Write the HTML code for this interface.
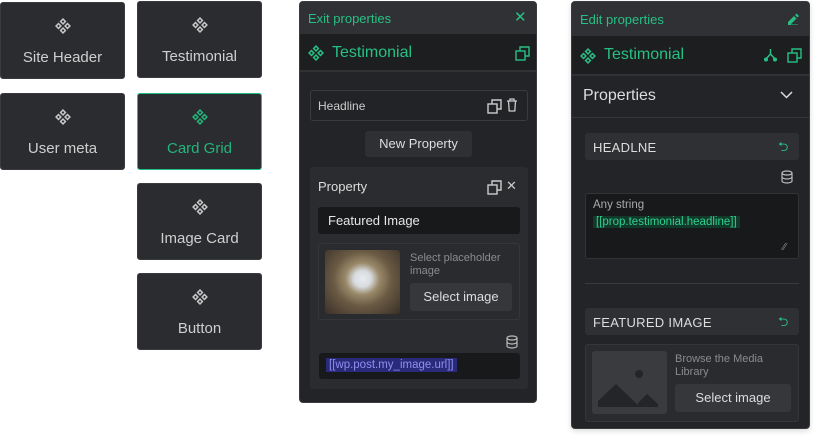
<!DOCTYPE html>
<html><head><style>
*{box-sizing:border-box;margin:0;padding:0}
body{width:816px;height:438px;background:#fff;font-family:"Liberation Sans",sans-serif;position:relative;overflow:hidden}
.a{position:absolute}
.card{position:absolute;background:#2b2c2f;border-radius:3px;color:#cfcfcf;font-size:15px;text-align:center;width:125px;height:77px;border:1px solid #3a3b3e}
.card svg{position:absolute;left:54px;top:15px}
.card span{position:absolute;left:0;right:0;top:46px}
.sel{border:1.5px solid #22c080;color:#22b57c}
.g{color:#27c084}
.box{position:absolute;border-radius:3px}
</style></head><body>
<svg width="0" height="0" style="position:absolute"><defs>
<g id="dia" fill="none" stroke-width="1.5"><rect x="6.3" y="1.8" width="3.4" height="3.4" transform="rotate(45 8 3.5)"/><rect x="6.3" y="10.8" width="3.4" height="3.4" transform="rotate(45 8 12.5)"/><rect x="1.8" y="6.3" width="3.4" height="3.4" transform="rotate(45 3.5 8)"/><rect x="10.8" y="6.3" width="3.4" height="3.4" transform="rotate(45 12.5 8)"/></g>
<g id="cp" fill="none" stroke-width="1.4"><rect x="1" y="5" width="9" height="9"/><path d="M5 5V1h9v9h-4"/></g>
</defs></svg>

<div class="card" style="left:0;top:2px"><svg width="16" height="16" stroke="#c8c8c8"><use href="#dia"/></svg><span>Site Header</span></div>
<div class="card" style="left:137px;top:1px"><svg width="16" height="16" stroke="#c8c8c8"><use href="#dia"/></svg><span>Testimonial</span></div>
<div class="card" style="left:0;top:93px"><svg width="16" height="16" stroke="#c8c8c8"><use href="#dia"/></svg><span>User meta</span></div>
<div class="card sel" style="left:137px;top:93px"><svg width="16" height="16" stroke="#22b57c"><use href="#dia"/></svg><span>Card Grid</span></div>
<div class="card" style="left:137px;top:183px"><svg width="16" height="16" stroke="#c8c8c8"><use href="#dia"/></svg><span>Image Card</span></div>
<div class="card" style="left:137px;top:273px"><svg width="16" height="16" stroke="#c8c8c8"><use href="#dia"/></svg><span>Button</span></div>

<!-- middle panel -->
<div class="a" style="left:299px;top:1px;width:238px;height:402px;background:#232427;border-radius:4px;border:1px solid #3a3b3e;overflow:hidden">
 <div class="a" style="left:0;top:0;width:238px;height:32px;background:#2f3134"></div>
 <div class="a g" style="left:8px;top:9px;font-size:13px">Exit properties</div>
 <div class="a g" style="left:214px;top:6px;font-size:15px">✕</div>
 <div class="a" style="left:0;top:32px;width:238px;height:38px;background:#1d1e20;border-bottom:2px solid #313235"></div>
 <svg class="a" style="left:8px;top:43px" width="16" height="16" stroke="#27c084"><use href="#dia"/></svg>
 <div class="a g" style="left:32px;top:42px;font-size:16px">Testimonial</div>
 <svg class="a" style="left:215px;top:44px" width="15" height="15" stroke="#27c084"><use href="#cp"/></svg>
 <div class="box" style="left:10px;top:88px;width:218px;height:31px;border:1px solid #3a3b3e;background:#222326"></div>
 <div class="a" style="left:18px;top:97px;font-size:12px;color:#ccc">Headline</div>
 <svg class="a" style="left:187px;top:97px" width="15" height="15" stroke="#ccc"><use href="#cp"/></svg>
 <svg class="a" style="left:206px;top:96px" width="12" height="14" fill="none" stroke="#ccc" stroke-width="1.3"><path d="M1 3h10M4 3V1h4v2M2.5 3l.7 10h5.6l.7-10"/></svg>
 <div class="box" style="left:65px;top:129px;width:107px;height:26px;background:#2e3033;color:#ddd;font-size:13px;text-align:center;line-height:26px">New Property</div>
 <div class="box" style="left:10px;top:165px;width:218px;height:222px;background:#2b2c2f"></div>
 <div class="a" style="left:18px;top:177px;font-size:13px;color:#ddd">Property</div>
 <svg class="a" style="left:187px;top:178px" width="15" height="15" stroke="#ccc"><use href="#cp"/></svg>
 <div class="a" style="left:206px;top:176px;font-size:13px;color:#ccc">✕</div>
 <div class="box" style="left:18px;top:205px;width:202px;height:27px;background:#18191b"></div>
 <div class="a" style="left:28px;top:211px;font-size:13px;color:#e6e6e6">Featured Image</div>
 <div class="box" style="left:18px;top:241px;width:202px;height:77px;border:1px solid #35363a;background:#2a2b2e"></div>
 <div class="box" style="left:25px;top:248px;width:75px;height:64px;background:radial-gradient(ellipse at 50% 45%,#e8ecf0 0,#d8dce0 16%,#9a8a6a 32%,#6a5a44 55%,#3a3028 100%)"></div>
 <div class="a" style="left:110px;top:250px;font-size:11px;color:#8a8b8e;line-height:13px">Select placeholder<br>image</div>
 <div class="box" style="left:110px;top:281px;width:102px;height:28px;background:#36373b;color:#ddd;font-size:13px;text-align:center;line-height:28px">Select image</div>
 <svg class="a" style="left:206px;top:333px" width="12" height="14" fill="none" stroke="#bbb" stroke-width="1.2"><ellipse cx="6" cy="3" rx="5" ry="2"/><path d="M1 3v8c0 1 2.2 2 5 2s5-1 5-2V3M1 7c0 1 2.2 2 5 2s5-1 5-2"/></svg>
 <div class="box" style="left:19px;top:351px;width:201px;height:26px;background:#18191b"></div>
 <div class="a" style="left:26px;top:356px;font-size:11.5px;color:#8e8ff0;background:#2a2a7a;padding:1px 3px">[[wp.post.my_image.url]]</div>
</div>

<!-- right panel -->
<div class="a" style="left:571px;top:1px;width:239px;height:428px;background:#232427;border-radius:4px;border:1px solid #3a3b3e;overflow:hidden;box-shadow:0 2px 6px rgba(0,0,0,.15)">
 <div class="a" style="left:0;top:0;width:239px;height:34px;background:#2f3134"></div>
 <div class="a g" style="left:8px;top:10px;font-size:13px">Edit properties</div>
 <svg class="a" style="left:215px;top:11px" width="12" height="12" fill="#27c084"><path d="M1 9l6-6 2.5 2.5-6 6H1zM8 2l1.5-1.5 2.5 2.5L10.5 4.5zM1 11.5h10v.5H1z"/></svg>
 <div class="a" style="left:0;top:34px;width:239px;height:40px;background:#1d1e20;border-bottom:2px solid #313235"></div>
 <svg class="a" style="left:8px;top:46px" width="16" height="16" stroke="#27c084"><use href="#dia"/></svg>
 <div class="a g" style="left:32px;top:44px;font-size:16px">Testimonial</div>
 <svg class="a" style="left:191px;top:45px" width="15" height="15" fill="none" stroke="#27c084" stroke-width="1.5"><path d="M7.5 2v5M7.5 7L3 12M7.5 7l4.5 5"/><circle cx="3" cy="12.5" r="1.3" fill="#27c084"/><circle cx="12" cy="12.5" r="1.3" fill="#27c084"/></svg>
 <svg class="a" style="left:215px;top:46px" width="15" height="15" stroke="#27c084"><use href="#cp"/></svg>
 <div class="a" style="left:11px;top:85px;font-size:16px;color:#ddd">Properties</div>
 <svg class="a" style="left:208px;top:89px" width="13" height="9" fill="none" stroke="#ddd" stroke-width="1.5"><path d="M1 1l5.5 5.5L12 1"/></svg>
 <div class="a" style="left:0;top:115px;width:239px;height:1px;background:#36373a"></div>
 <div class="box" style="left:13px;top:131px;width:214px;height:27px;background:#2e3033"></div>
 <div class="a" style="left:21px;top:138px;font-size:13px;color:#ddd;letter-spacing:.3px">HEADLNE</div>
 <div class="a g" style="left:206px;top:136px;font-size:13px">⮌</div>
 <svg class="a" style="left:209px;top:168px" width="12" height="14" fill="none" stroke="#bbb" stroke-width="1.2"><ellipse cx="6" cy="3" rx="5" ry="2"/><path d="M1 3v8c0 1 2.2 2 5 2s5-1 5-2V3M1 7c0 1 2.2 2 5 2s5-1 5-2"/></svg>
 <div class="box" style="left:13px;top:191px;width:214px;height:66px;background:#18191b;border:1px solid #333"></div>
 <div class="a" style="left:21px;top:197px;font-size:11.5px;color:#aaa">Any string</div>
 <div class="a" style="left:21px;top:214px;font-size:11.5px;color:#2fd08f;background:#123a2a;padding:0 3px">[[prop.testimonial.headline]]</div>
 <div class="a" style="left:211px;top:240px;font-size:10px;color:#888">⁄⁄</div>
 <div class="a" style="left:13px;top:281px;width:214px;height:1px;background:#3a3b3e"></div>
 <div class="box" style="left:13px;top:306px;width:214px;height:27px;background:#2e3033"></div>
 <div class="a" style="left:21px;top:313px;font-size:13px;color:#ddd;letter-spacing:.3px">FEATURED IMAGE</div>
 <div class="a g" style="left:206px;top:311px;font-size:13px">⮌</div>
 <div class="box" style="left:13px;top:342px;width:214px;height:78px;border:1px solid #35363a;background:#2a2b2e"></div>
 <div class="box" style="left:20px;top:349px;width:75px;height:63px;background:#3a3b3f;overflow:hidden">
  <svg width="75" height="63"><circle cx="47" cy="23" r="4" fill="#242528"/><path d="M6 56V50L24 33L48 56z M46 52l9-9 11 10v3H46z" fill="#242528"/></svg>
 </div>
 <div class="a" style="left:103px;top:351px;font-size:11px;color:#8a8b8e;line-height:13px">Browse the Media<br>Library</div>
 <div class="box" style="left:103px;top:382px;width:116px;height:28px;background:#36373b;color:#ddd;font-size:13px;text-align:center;line-height:28px">Select image</div>
</div>
</body></html>
